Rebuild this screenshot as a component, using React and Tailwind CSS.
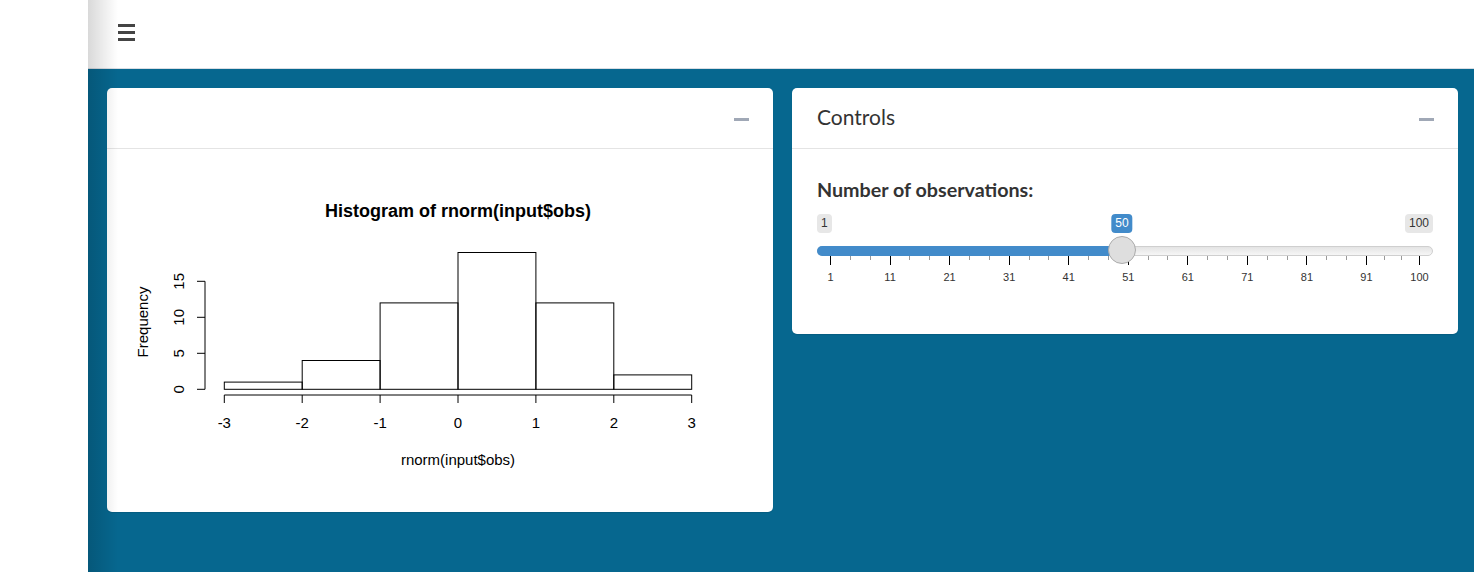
import React from 'react';

const PLOT_FONT = "'Liberation Sans', Arial, sans-serif";

// histogram data (bin start, count)
const bins = [
  [-3, 1],
  [-2, 4],
  [-1, 12],
  [0, 19],
  [1, 12],
  [2, 2],
];
const px = (v) => 458 + 77.9 * v;
const py = (c) => 389.3 - 7.2 * c;

const Histogram = () => (
  <svg width="666" height="363" viewBox="107 149 666 363" className="block">
    <text
      x="458"
      y="217"
      textAnchor="middle"
      fontFamily={PLOT_FONT}
      fontWeight="bold"
      fontSize="18"
      fill="#000"
    >
      Histogram of rnorm(input$obs)
    </text>

    {bins.map(([b, c]) => (
      <rect
        key={b}
        x={px(b)}
        y={py(c)}
        width={77.9}
        height={389.3 - py(c)}
        fill="none"
        stroke="#000"
        strokeWidth="1"
      />
    ))}

    {/* y axis */}
    <line x1="205" y1={py(15)} x2="205" y2={py(0)} stroke="#000" strokeWidth="1" />
    {[0, 5, 10, 15].map((t) => (
      <g key={t}>
        <line x1="197" y1={py(t)} x2="205" y2={py(t)} stroke="#000" strokeWidth="1" />
        <text
          x="184"
          y={py(t)}
          transform={`rotate(-90 184 ${py(t)})`}
          textAnchor="middle"
          fontFamily={PLOT_FONT}
          fontSize="15"
          fill="#000"
        >
          {t}
        </text>
      </g>
    ))}
    <text
      x="148"
      y="322"
      transform="rotate(-90 148 322)"
      textAnchor="middle"
      fontFamily={PLOT_FONT}
      fontSize="15"
      fill="#000"
    >
      Frequency
    </text>

    {/* x axis */}
    <line x1={px(-3)} y1="395" x2={px(3)} y2="395" stroke="#000" strokeWidth="1" />
    {[-3, -2, -1, 0, 1, 2, 3].map((t) => (
      <g key={t}>
        <line x1={px(t)} y1="395" x2={px(t)} y2="403" stroke="#000" strokeWidth="1" />
        <text
          x={px(t)}
          y="428"
          textAnchor="middle"
          fontFamily={PLOT_FONT}
          fontSize="15"
          fill="#000"
        >
          {t}
        </text>
      </g>
    ))}
    <text x="458" y="465" textAnchor="middle" fontFamily={PLOT_FONT} fontSize="15" fill="#000">
      rnorm(input$obs)
    </text>
  </svg>
);

// slider grid: major ticks every 10%, last one at 100
const majors = [
  ...Array.from({ length: 10 }, (_, k) => ({ x: 13 + 59.55 * k, label: 1 + 10 * k })),
  { x: 602, label: 100 },
];
const minors = majors.slice(0, -1).flatMap((m, i) => {
  const next = majors[i + 1].x;
  const step = (next - m.x) / 3;
  return [m.x + step, m.x + 2 * step];
});
const HANDLE_X = 305;

const Slider = () => (
  <div className="relative h-[70px] w-full font-['Liberation_Sans',Arial,sans-serif]">
    <span className="absolute left-0 top-0 h-[19px] rounded-[4px] bg-[#e7e7e7] px-[4px] text-[12px] leading-[19px] text-[#333]">
      1
    </span>
    <span className="absolute right-0 top-0 h-[19px] rounded-[4px] bg-[#e7e7e7] px-[4px] text-[12px] leading-[19px] text-[#333]">
      100
    </span>
    <span
      className="absolute top-0 h-[19px] -translate-x-1/2 rounded-[4px] bg-[#428bca] px-[4px] text-[12px] leading-[19px] text-white"
      style={{ left: HANDLE_X }}
    >
      50
    </span>

    <div className="absolute left-0 right-0 top-[32px] h-[10px] rounded-full border border-[#cfcfcf] bg-gradient-to-b from-[#e4e4e4] to-[#f6f6f6]" />
    <div
      className="absolute left-0 top-[32px] h-[10px] rounded-l-full bg-[#428bca]"
      style={{ width: HANDLE_X }}
    />

    {minors.map((x) => (
      <span key={x} className="absolute top-[42px] h-[4px] w-px bg-[#999]" style={{ left: x }} />
    ))}
    {majors.map((m) => (
      <React.Fragment key={m.label}>
        <span className="absolute top-[42px] h-[9px] w-px bg-black" style={{ left: m.x }} />
        <span
          className="absolute top-[58px] -translate-x-1/2 text-[11px] leading-[11px] text-[#333]"
          style={{ left: m.x + 0.5 }}
        >
          {m.label}
        </span>
      </React.Fragment>
    ))}

    <div
      className="absolute top-[22px] h-[28px] w-[28px] -translate-x-1/2 rounded-full border border-[#ababab] bg-[#dedede]"
      style={{ left: HANDLE_X }}
    />
  </div>
);

const Box = ({ title, children }) => (
  <div className="w-[666px] shrink-0 rounded-[5px] bg-white shadow-[0_1px_1px_rgba(0,0,0,0.1)]">
    <div className="flex h-[61px] items-center justify-between border-b border-[#e4e4e4] pl-[25px] pr-[24px]">
      <h3 className="-mt-[3px] text-[21px] leading-none text-[#333]">{title}</h3>
      <span className="h-[3px] w-[15px] translate-y-[1px] bg-[#a0a8b6]" />
    </div>
    {children}
  </div>
);

export default function App() {
  return (
    <div className="relative flex h-[572px] w-[1474px] overflow-hidden bg-white font-['Lato',sans-serif]">
      <aside className="w-[88px] shrink-0 bg-white" />
      <div className="flex flex-1 flex-col">
        <header className="flex h-[69px] shrink-0 border-b border-[#d9dde3] bg-white pl-[30px] pt-[24px]">
          <button className="flex flex-col gap-[4px] self-start">
            <span className="h-[3px] w-[17px] bg-[#444]" />
            <span className="h-[3px] w-[17px] bg-[#444]" />
            <span className="h-[3px] w-[17px] bg-[#444]" />
          </button>
        </header>
        <main className="flex flex-1 items-start gap-[19px] bg-[#06678f] pl-[19px] pr-[16px] pt-[19px]">
          <Box title="">
            <Histogram />
          </Box>
          <Box title="Controls">
            <div className="h-[185px] px-[25px] pt-[29px]">
              <label className="block text-[19.7px] font-bold leading-[24px] text-[#333]">
                Number of observations:
              </label>
              <div className="mt-[12px]">
                <Slider />
              </div>
            </div>
          </Box>
        </main>
      </div>
      <div className="pointer-events-none absolute left-[88px] top-0 h-full w-[30px] bg-gradient-to-r from-black/15 to-transparent" />
    </div>
  );
}
